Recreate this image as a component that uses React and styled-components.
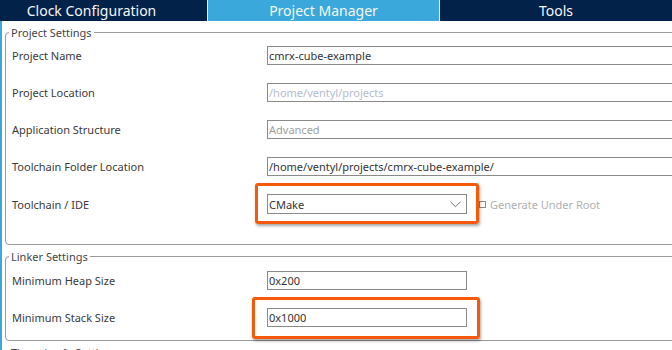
import React from "react";
import styled, { createGlobalStyle } from "styled-components";

const Global = createGlobalStyle`
  html, body { margin: 0; padding: 0; background: #fff; overflow: hidden; }
  body { font-family: "Noto Sans", "Open Sans", sans-serif; }
`;

const projectRows = [
  { label: "Project Name", value: "cmrx-cube-example" },
  { label: "Project Location", value: "/home/ventyl/projects", tone: "muted" },
  { label: "Application Structure", value: "Advanced", tone: "dim" },
  { label: "Toolchain Folder Location", value: "/home/ventyl/projects/cmrx-cube-example/" },
];

const App = () => {
  return (
    <>
      <Global />
      <Screen>
        <Tabs>
          <Tab offset={24}>Clock Configuration</Tab>
          <Tab active>Project Manager</Tab>
          <Tab>Tools</Tab>
        </Tabs>
        <Strip />
        <Body>
          <Group>
            <Legend>Project Settings</Legend>
            <Rows top={6} bottom={31}>
              {projectRows.map(({ label, value, tone }) => (
                <Row key={label}>
                  <Label>{label}</Label>
                  <Field tone={tone}>{value}</Field>
                </Row>
              ))}
              <Row>
                <Label>Toolchain / IDE</Label>
                <Inline>
                  <Highlight>
                    <Combo>
                      CMake
                      <Chevron viewBox="0 0 12 7">
                        <path d="M0.5 0.5 L6 6 L11.5 0.5" />
                      </Chevron>
                    </Combo>
                    <Mark l={12} r={12} t={11} b={10} />
                  </Highlight>
                  <Check />
                  <CheckText>Generate Under Root</CheckText>
                </Inline>
              </Row>
            </Rows>
          </Group>
          <Group>
            <Legend>Linker Settings</Legend>
            <Rows top={7} bottom={13}>
              <Row>
                <Label>Minimum Heap Size</Label>
                <Field short>0x200</Field>
              </Row>
              <Row>
                <Label>Minimum Stack Size</Label>
                <Highlight>
                  <Field short>0x1000</Field>
                  <Mark l={15} r={13} t={11} b={12} />
                </Highlight>
              </Row>
            </Rows>
          </Group>
          <Group>
            <Legend>Thread-safe Settings</Legend>
            <Rows top={6} bottom={40} />
          </Group>
        </Body>
      </Screen>
    </>
  );
};

export default App;

const Screen = styled.div`
  width: 672px;
  height: 350px;
  overflow: hidden;
  display: flex;
  flex-direction: column;
`;

const Tabs = styled.div`
  display: grid;
  grid-template-columns: 207px 231px 1fr;
  column-gap: 1px;
  height: 21px;
  background: #e8eef3;
`;

const Tab = styled.div`
  display: flex;
  align-items: center;
  justify-content: center;
  padding-right: ${(p) => p.offset || 0}px;
  background: ${(p) => (p.active ? "#3aa8da" : "#03224a")};
  color: #f4f7fb;
  font-size: 14px;
  line-height: 21px;
  white-space: nowrap;
`;

const Strip = styled.div`
  height: 4px;
  background: #3aa8da;
`;

const Body = styled.div`
  flex: 1;
  width: 720px;
  border-left: 2px solid #3aa8da;
  padding: 4px 0 0 3px;
  display: flex;
  flex-direction: column;
  gap: 4px;
`;

const Group = styled.fieldset`
  margin: 0;
  padding: 0 0 0 6px;
  border: 1px solid #9a9a9a;
  border-radius: 4px;
  min-width: 0;
`;

const Legend = styled.legend`
  padding: 0 2px;
  margin-left: -3px;
  font-size: 11px;
  line-height: 15px;
  color: #444;
`;

const Rows = styled.div`
  display: flex;
  flex-direction: column;
  gap: 18px;
  padding-top: ${(p) => p.top}px;
  padding-bottom: ${(p) => p.bottom}px;
`;

const Row = styled.div`
  display: grid;
  grid-template-columns: 255px 1fr;
  align-items: center;
  height: 19px;
`;

const Label = styled.div`
  font-size: 11px;
  color: #3a3a3a;
  white-space: nowrap;
`;

const toneColor = { muted: "#b4bccb", dim: "#a0a0a0" };

const Field = styled.div`
  box-sizing: border-box;
  height: 19px;
  width: ${(p) => (p.short ? "200px" : "auto")};
  border: 1px solid #8a8a8a;
  background: #fff;
  padding-left: 1px;
  font-size: 11px;
  line-height: 17px;
  color: ${(p) => toneColor[p.tone] || "#333"};
  white-space: nowrap;
`;

const Inline = styled.div`
  display: flex;
  align-items: center;
`;

const Highlight = styled.div`
  position: relative;
  width: 200px;
`;

const Mark = styled.div`
  position: absolute;
  left: -${(p) => p.l}px;
  right: -${(p) => p.r}px;
  top: -${(p) => p.t}px;
  bottom: -${(p) => p.b}px;
  border: 3px solid #f55a0a;
  border-radius: 3px;
  box-shadow: 1px 2px 3px rgba(0, 0, 0, 0.35);
  pointer-events: none;
`;

const Combo = styled.div`
  box-sizing: border-box;
  height: 20px;
  display: flex;
  align-items: center;
  justify-content: space-between;
  border: 1px solid #8a8a8a;
  padding: 0 5px 0 1px;
  font-size: 11px;
  color: #333;
`;

const Chevron = styled.svg`
  width: 11px;
  height: 7px;
  fill: none;
  stroke: #666;
  stroke-width: 1;
`;

const Check = styled.div`
  width: 7px;
  height: 7px;
  margin-left: 12px;
  border: 1px solid #8a8a8a;
  box-sizing: border-box;
`;

const CheckText = styled.div`
  margin-left: 4px;
  font-size: 11px;
  color: #b0b0b0;
  white-space: nowrap;
`;
